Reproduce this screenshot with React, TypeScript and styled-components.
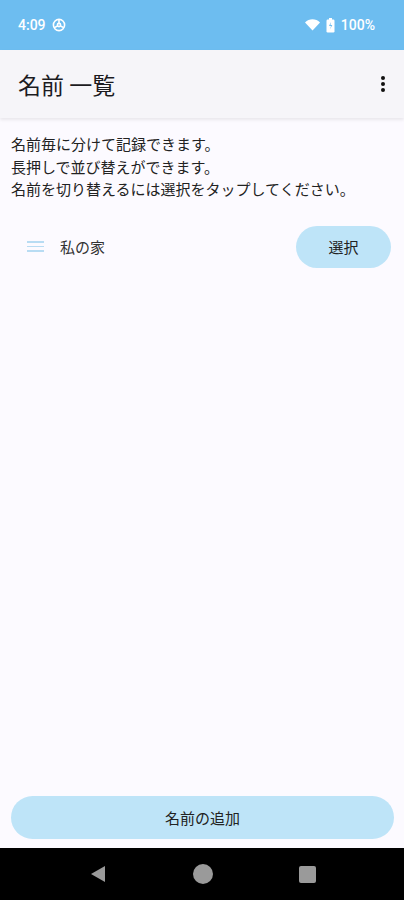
import React from 'react';
import styled, { createGlobalStyle } from 'styled-components';

const GlobalStyle = createGlobalStyle`
  html, body {
    margin: 0;
    padding: 0;
    background: #fcfaff;
  }
  body {
    font-family: Roboto, "Noto Sans CJK JP", sans-serif;
  }
`;

const Screen = styled.div`
  width: 404px;
  height: 900px;
  display: flex;
  flex-direction: column;
  background: #fcfaff;
  overflow: hidden;
`;

const StatusBar = styled.div`
  height: 50px;
  flex-shrink: 0;
  background: #6dbdf0;
  display: flex;
  align-items: center;
  justify-content: space-between;
  padding: 0 29px 0 18px;
  color: #fff;
  font-family: Roboto, sans-serif;
  font-weight: 500;
  font-size: 14px;
`;

const StatusGroup = styled.div`
  display: flex;
  align-items: center;
  gap: 6px;
`;

const AppBar = styled.header`
  height: 68px;
  flex-shrink: 0;
  background: #f6f5f9;
  display: flex;
  align-items: center;
  justify-content: space-between;
  padding: 0 14px 0 18px;
  box-shadow: 0 2px 3px rgba(0, 0, 0, 0.08);
  position: relative;
  z-index: 1;
`;

const Title = styled.h1`
  margin: 0;
  font-family: "Noto Sans CJK JP", sans-serif;
  font-size: 23px;
  font-weight: 400;
  color: #1c1b1f;
`;

const MenuButton = styled.button`
  border: none;
  background: none;
  padding: 4px;
  display: flex;
  cursor: pointer;
`;

const Content = styled.main`
  flex: 1;
  display: flex;
  flex-direction: column;
  padding: 15px 13px 10px 11px;
`;

const Description = styled.p`
  margin: 0;
  font-family: "Noto Sans CJK JP", sans-serif;
  font-size: 15px;
  line-height: 22.5px;
  color: #222;
`;

const List = styled.ul`
  list-style: none;
  margin: 24px 0 0;
  padding: 0;
`;

const Row = styled.li`
  display: flex;
  align-items: center;
  height: 44px;
  padding-left: 16px;
`;

const Handle = styled.span`
  width: 17px;
  display: flex;
  flex-direction: column;
  gap: 3px;

  & > i {
    display: block;
    height: 1.5px;
    background: #b8dcf3;
  }
`;

const RowLabel = styled.span`
  flex: 1;
  margin-left: 16px;
  font-family: "Noto Sans CJK JP", sans-serif;
  font-size: 15px;
  color: #333;
`;

const PillButton = styled.button<{ $wide?: boolean }>`
  border: none;
  border-radius: 22px;
  background: #bee4f8;
  color: #222;
  font-family: "Noto Sans CJK JP", sans-serif;
  font-size: 15px;
  height: ${({ $wide }) => ($wide ? '43px' : '42px')};
  width: ${({ $wide }) => ($wide ? '100%' : '95px')};
  cursor: pointer;
  flex-shrink: 0;
`;

const Footer = styled.div`
  padding: 0 10px 9px 11px;
  flex-shrink: 0;
`;

const NavBar = styled.nav`
  height: 52px;
  flex-shrink: 0;
  background: #000;
  display: flex;
  align-items: center;
  justify-content: center;
  gap: 86px;
`;

export default function App() {
  return (
    <>
      <GlobalStyle />
      <Screen>
        <StatusBar>
          <StatusGroup>
            <span>4:09</span>
            <svg width="14" height="14" viewBox="0 0 14 14" fill="none" stroke="#fff" strokeWidth="1.6">
              <circle cx="7" cy="7" r="5.6" />
              <circle cx="7" cy="7" r="1.6" />
              <path d="M7 1.4v4M2.3 9.6l3.3-1.6M11.7 9.6 8.4 8" />
            </svg>
          </StatusGroup>
          <StatusGroup>
            <svg width="15" height="12" viewBox="0 0 15 12">
              <path d="M0 3.5C4.2-0.7 10.8-0.7 15 3.5L7.5 11.5Z" fill="#fff" />
            </svg>
            <svg width="9" height="15" viewBox="0 0 9 15">
              <rect x="3" y="0" width="3" height="2" fill="#fff" />
              <rect x="0.5" y="1.5" width="8" height="13" rx="1.2" fill="#fff" />
              <path d="M5 4 3 8h2l-1 3.5L6.3 7H4.5Z" fill="#6dbdf0" />
            </svg>
            <span>100%</span>
          </StatusGroup>
        </StatusBar>

        <AppBar>
          <Title>名前 一覧</Title>
          <MenuButton aria-label="menu">
            <svg width="6" height="18" viewBox="0 0 6 18" fill="#111">
              <circle cx="3" cy="3" r="2" />
              <circle cx="3" cy="9" r="2" />
              <circle cx="3" cy="15" r="2" />
            </svg>
          </MenuButton>
        </AppBar>

        <Content>
          <Description>
            名前毎に分けて記録できます。
            <br />
            長押しで並び替えができます。
            <br />
            名前を切り替えるには選択をタップしてください。
          </Description>
          <List>
            <Row>
              <Handle>
                <i />
                <i />
                <i />
              </Handle>
              <RowLabel>私の家</RowLabel>
              <PillButton>選択</PillButton>
            </Row>
          </List>
        </Content>

        <Footer>
          <PillButton $wide>名前の追加</PillButton>
        </Footer>

        <NavBar>
          <svg width="18" height="18" viewBox="0 0 18 18">
            <path d="M16 1v16L2 9Z" fill="#9a9a9a" />
          </svg>
          <svg width="20" height="20" viewBox="0 0 20 20">
            <circle cx="10" cy="10" r="10" fill="#9a9a9a" />
          </svg>
          <svg width="17" height="17" viewBox="0 0 17 17">
            <rect width="17" height="17" rx="2" fill="#9a9a9a" />
          </svg>
        </NavBar>
      </Screen>
    </>
  );
}
